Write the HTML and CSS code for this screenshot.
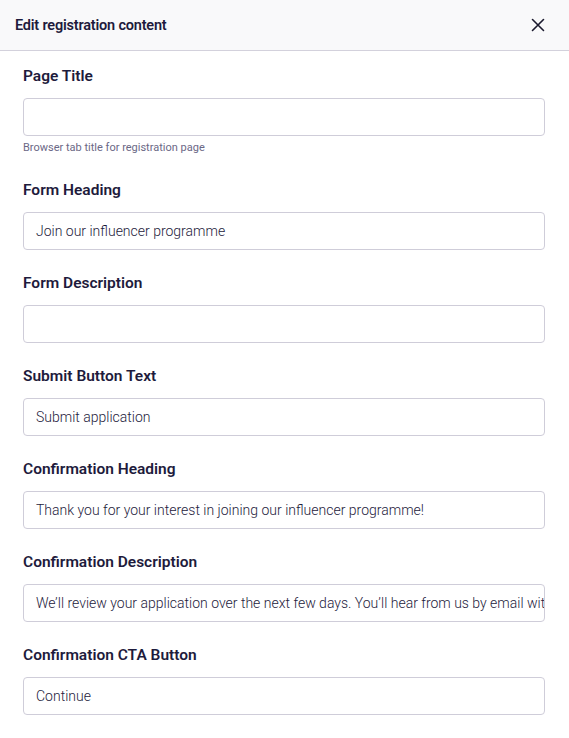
FILE: index.html
```html
<!DOCTYPE html>
<html>
<head>
<meta charset="utf-8">
<link rel="stylesheet" href="styles.css">
</head>
<body>
<div class="panel">
  <header class="header">
    <h1 class="title">Edit registration content</h1>
    <button class="close" aria-label="Close">
      <svg width="14" height="14" viewBox="0 0 14 14"><path d="M1.5 1.5 L12.5 12.5 M12.5 1.5 L1.5 12.5" stroke="#1b1a2e" stroke-width="1.6" stroke-linecap="round" fill="none"/></svg>
    </button>
  </header>
  <div class="body">
    <div class="field">
      <label class="label">Page Title</label>
      <div class="input"></div>
      <div class="help">Browser tab title for registration page</div>
    </div>
    <div class="field">
      <label class="label">Form Heading</label>
      <div class="input">Join our influencer programme</div>
    </div>
    <div class="field">
      <label class="label">Form Description</label>
      <div class="input"></div>
    </div>
    <div class="field">
      <label class="label">Submit Button Text</label>
      <div class="input">Submit application</div>
    </div>
    <div class="field">
      <label class="label">Confirmation Heading</label>
      <div class="input">Thank you for your interest in joining our influencer programme!</div>
    </div>
    <div class="field">
      <label class="label">Confirmation Description</label>
      <div class="input">We’ll review your application over the next few days. You’ll hear from us by email within a week.</div>
    </div>
    <div class="field">
      <label class="label">Confirmation CTA Button</label>
      <div class="input">Continue</div>
    </div>
  </div>
</div>
</body>
</html>
```
FILE: styles.css
```css
* { box-sizing: border-box; }
html, body { margin: 0; padding: 0; background: #ffffff; }
body { font-family: Roboto, "Liberation Sans", sans-serif; color: #1e1b3c; }
.panel { width: 569px; overflow: hidden; }
.header {
  height: 51px;
  background: #f9f9fa;
  border-bottom: 1px solid #d3d1dc;
  display: flex;
  align-items: center;
  justify-content: space-between;
  padding: 0 24px 0 15px;
}
.title { margin: 0; font-size: 14.5px; font-weight: 600; color: #1e1b3c; letter-spacing: -0.2px; }
.close { background: none; border: 0; padding: 0; width: 14px; height: 14px; display: flex; cursor: pointer; }
.body { padding: 15px 24px 0 23px; }
.field { display: flex; flex-direction: column; margin-bottom: 23px; }
.label { font-size: 15.5px; font-weight: 600; line-height: 20px; color: #1e1b3c; margin-bottom: 12px; letter-spacing: 0; }
.input {
  height: 38px;
  border: 1px solid #cfcdd9;
  border-radius: 4px;
  padding: 0 12px;
  font-size: 14px;
  font-weight: 300;
  line-height: 36px;
  color: #1e1b3c;
  white-space: nowrap;
  overflow: hidden;
  text-overflow: clip;
}
.help { font-size: 11px; line-height: 14px; color: #6b6886; margin-top: 5px; margin-bottom: 2px; }
```
